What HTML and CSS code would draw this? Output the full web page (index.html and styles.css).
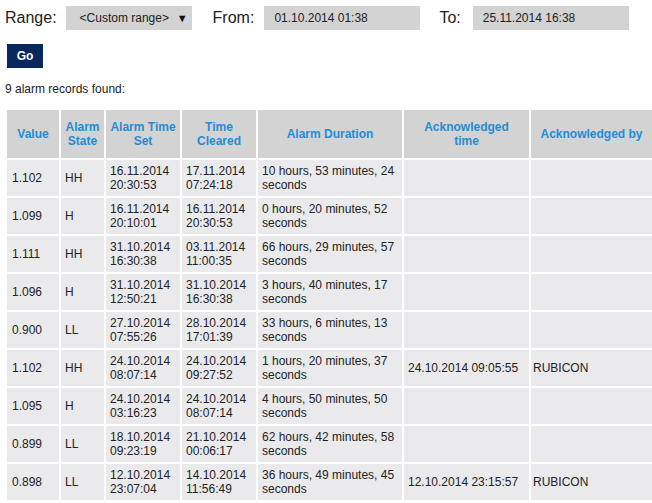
FILE: index.html
```html
<!DOCTYPE html>
<html>
<head>
<meta charset="utf-8">
<link rel="stylesheet" href="styles.css">
</head>
<body>
<div class="page">
  <div class="filters">
    <span class="label">Range:</span>
    <div class="select"><span>&lt;Custom range&gt;</span><span class="arrow">▼</span></div>
    <span class="label label-from">From:</span>
    <div class="input input-from">01.10.2014 01:38</div>
    <span class="label label-to">To:</span>
    <div class="input input-to">25.11.2014 16:38</div>
  </div>
  <button class="go">Go</button>
  <p class="found">9 alarm records found:</p>
  <table class="alarms">
    <thead>
      <tr>
        <th class="c-value">Value</th>
        <th class="c-state">Alarm State</th>
        <th class="c-set">Alarm Time Set</th>
        <th class="c-cleared">Time Cleared</th>
        <th class="c-dur">Alarm Duration</th>
        <th class="c-acktime">Acknowledged<br>time</th>
        <th class="c-ackby">Acknowledged by</th>
      </tr>
    </thead>
    <tbody>
      <tr><td>1.102</td><td>HH</td><td>16.11.2014 20:30:53</td><td>17.11.2014 07:24:18</td><td>10 hours, 53 minutes, 24 seconds</td><td></td><td></td></tr>
      <tr><td>1.099</td><td>H</td><td>16.11.2014 20:10:01</td><td>16.11.2014 20:30:53</td><td>0 hours, 20 minutes, 52 seconds</td><td></td><td></td></tr>
      <tr><td>1.111</td><td>HH</td><td>31.10.2014 16:30:38</td><td>03.11.2014 11:00:35</td><td>66 hours, 29 minutes, 57 seconds</td><td></td><td></td></tr>
      <tr><td>1.096</td><td>H</td><td>31.10.2014 12:50:21</td><td>31.10.2014 16:30:38</td><td>3 hours, 40 minutes, 17 seconds</td><td></td><td></td></tr>
      <tr><td>0.900</td><td>LL</td><td>27.10.2014 07:55:26</td><td>28.10.2014 17:01:39</td><td>33 hours, 6 minutes, 13 seconds</td><td></td><td></td></tr>
      <tr><td>1.102</td><td>HH</td><td>24.10.2014 08:07:14</td><td>24.10.2014 09:27:52</td><td>1 hours, 20 minutes, 37 seconds</td><td>24.10.2014 09:05:55</td><td>RUBICON</td></tr>
      <tr><td>1.095</td><td>H</td><td>24.10.2014 03:16:23</td><td>24.10.2014 08:07:14</td><td>4 hours, 50 minutes, 50 seconds</td><td></td><td></td></tr>
      <tr><td>0.899</td><td>LL</td><td>18.10.2014 09:23:19</td><td>21.10.2014 00:06:17</td><td>62 hours, 42 minutes, 58 seconds</td><td></td><td></td></tr>
      <tr><td>0.898</td><td>LL</td><td>12.10.2014 23:07:04</td><td>14.10.2014 11:56:49</td><td>36 hours, 49 minutes, 45 seconds</td><td>12.10.2014 23:15:57</td><td>RUBICON</td></tr>
    </tbody>
  </table>
</div>
</body>
</html>
```
FILE: styles.css
```css
html, body {
  margin: 0;
  padding: 0;
  background: #ffffff;
  overflow: hidden;
}
body {
  font-family: "Liberation Sans", Arial, sans-serif;
  color: #222222;
}
.page {
  padding: 6px 0 0 5px;
}
.filters {
  display: flex;
  align-items: center;
  height: 24px;
}
.label {
  font-size: 16px;
  color: #222;
}
.select {
  margin-left: 9px;
  width: 126px;
  height: 24px;
  background: #d3d3d3;
  display: flex;
  align-items: center;
  justify-content: space-between;
  padding: 0 4px 0 14px;
  box-sizing: border-box;
  font-size: 12px;
}
.arrow {
  font-size: 11px;
  color: #111;
}
.label-from {
  margin-left: 21px;
}
.label-to {
  margin-left: 19px;
}
.input {
  width: 156px;
  height: 24px;
  background: #d3d3d3;
  display: flex;
  align-items: center;
  padding-left: 10px;
  box-sizing: border-box;
  font-size: 12px;
}
.input-from {
  margin-left: 10px;
}
.input-to {
  margin-left: 12px;
}
.go {
  display: block;
  margin: 14px 0 0 2px;
  width: 36px;
  height: 24px;
  border: none;
  background: #06285f;
  color: #ffffff;
  font-family: "Liberation Sans", Arial, sans-serif;
  font-weight: bold;
  font-size: 12px;
  padding: 0;
}
.found {
  margin: 14px 0 0 0;
  font-size: 12px;
  line-height: 14px;
  height: 14px;
}
.alarms {
  margin-top: 12px;
  border-collapse: separate;
  border-spacing: 2px;
  table-layout: fixed;
  width: 649px;
  font-size: 12px;
  line-height: 14px;
}
.c-value { width: 52px; }
.c-state { width: 43px; }
.c-set { width: 74px; }
.c-cleared { width: 74px; }
.c-dur { width: 144px; }
.c-acktime { width: 125px; }
.c-ackby { width: 121px; }
.alarms th {
  background: #d3d3d3;
  color: #1f8dd6;
  font-weight: bold;
  height: 48px;
  padding: 0 3px;
  box-sizing: border-box;
  text-align: center;
  vertical-align: middle;
}
.alarms td {
  background: #eaeaec;
  height: 36px;
  padding: 0 2px 0 4px;
  box-sizing: border-box;
  vertical-align: middle;
  text-align: left;
}
.alarms td:first-child {
  padding-left: 5px;
}
.alarms td:last-child {
  padding-left: 2px;
}
```
